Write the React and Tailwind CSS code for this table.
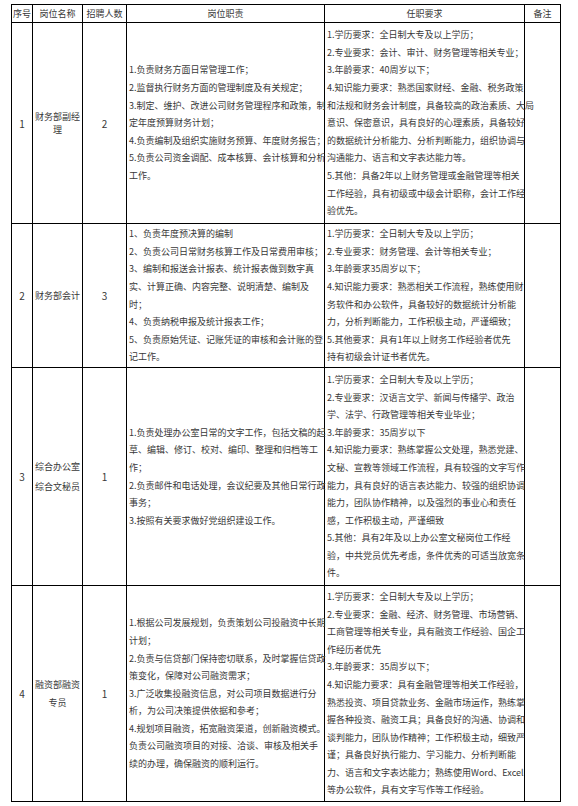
import React from "react";

const rows = [
  {
    no: "1",
    name: "财务部副经理",
    count: "2",
    nameLeading: "leading-[13px]",
    h: "h-[201px]",
    duty: [
      "1.负责财务方面日常管理工作；",
      "2.监督执行财务方面的管理制度及有关规定；",
      "3.制定、维护、改进公司财务管理程序和政策，制",
      "定年度预算财务计划；",
      "4.负责编制及组织实施财务预算、年度财务报告；",
      "5.负责公司资金调配、成本核算、会计核算和分析",
      "工作。",
    ],
    req: [
      "1.学历要求：全日制大专及以上学历；",
      "2.专业要求：会计、审计、财务管理等相关专业；",
      "3.年龄要求：40周岁以下；",
      "4.知识能力要求：熟悉国家财经、金融、税务政策",
      "和法规和财务会计制度，具备较高的政治素质、大局",
      "意识、保密意识，具有良好的心理素质，具备较好",
      "的数据统计分析能力、分析判断能力，组织协调与",
      "沟通能力、语言和文字表达能力等。",
      "5.其他：具备2年以上财务管理或金融管理等相关",
      "工作经验，具有初级或中级会计职称，会计工作经",
      "验优先。",
    ],
  },
  {
    no: "2",
    name: "财务部会计",
    count: "3",
    nameLeading: "leading-[17px]",
    h: "h-[144px]",
    duty: [
      "1、负责年度预决算的编制",
      "2、负责公司日常财务核算工作及日常费用审核；",
      "3、编制和报送会计报表、统计报表做到数字真",
      "实、计算正确、内容完整、说明清楚、编制及",
      "时；",
      "4、负责纳税申报及统计报表工作；",
      "5、负责原始凭证、记账凭证的审核和会计账的登",
      "记工作。",
    ],
    req: [
      "1.学历要求：全日制大专及以上学历；",
      "2.专业要求：财务管理、会计等相关专业；",
      "3.年龄要求35周岁以下；",
      "4.知识能力要求：熟悉相关工作流程，熟练使用财",
      "务软件和办公软件，具备较好的数据统计分析能",
      "力，分析判断能力，工作积极主动，严谨细致；",
      "5.其他要求：具有1年以上财务工作经验者优先",
      "持有初级会计证书者优先。",
    ],
  },
  {
    no: "3",
    name: "综合办公室综合文秘员",
    count: "1",
    nameLeading: "leading-[20px]",
    h: "h-[218px]",
    duty: [
      "1.负责处理办公室日常的文字工作，包括文稿的起",
      "草、编辑、修订、校对、编印、整理和归档等工",
      "作；",
      "2.负责邮件和电话处理，会议纪要及其他日常行政",
      "事务；",
      "3.按照有关要求做好党组织建设工作。",
    ],
    req: [
      "1.学历要求：全日制大专及以上学历；",
      "2.专业要求：汉语言文学、新闻与传播学、政治",
      "学、法学、行政管理等相关专业毕业；",
      "3.年龄要求：35周岁以下",
      "4.知识能力要求：熟练掌握公文处理，熟悉党建、",
      "文秘、宣教等领域工作流程，具有较强的文字写作",
      "能力，具有良好的语言表达能力、较强的组织协调",
      "能力，团队协作精神，以及强烈的事业心和责任",
      "感，工作积极主动，严谨细致",
      "5.其他：具有2年及以上办公室文秘岗位工作经",
      "验，中共党员优先考虑，条件优秀的可适当放宽条",
      "件。",
    ],
  },
  {
    no: "4",
    name: "融资部融资专员",
    count: "1",
    nameLeading: "leading-[18px]",
    h: "h-[216px]",
    duty: [
      "1.根据公司发展规划，负责策划公司投融资中长期",
      "计划；",
      "2.负责与信贷部门保持密切联系，及时掌握信贷政",
      "策变化，保障对公司融资需求；",
      "3.广泛收集投融资信息，对公司项目数据进行分",
      "析，为公司决策提供依据和参考；",
      "4.规划项目融资，拓宽融资渠道，创新融资模式。",
      "负责公司融资项目的对接、洽谈、审核及相关手",
      "续的办理，确保融资的顺利运行。",
    ],
    req: [
      "1.学历要求：全日制大专及以上学历；",
      "2.专业要求：金融、经济、财务管理、市场营销、",
      "工商管理等相关专业，具有融资工作经验、国企工",
      "作经历者优先",
      "3.年龄要求：35周岁以下；",
      "4.知识能力要求：具有金融管理等相关工作经验，",
      "熟悉投资、项目贷款业务、金融市场运作，熟练掌",
      "握各种投资、融资工具；具备良好的沟通、协调和",
      "谈判能力，团队协作精神；工作积极主动，细致严",
      "谨；具备良好执行能力、学习能力、分析判断能",
      "力、语言和文字表达能力；熟练使用Word、Excel",
      "等办公软件，具有文字写作等工作经验。",
    ],
  },
];

const cell = "border border-black align-middle p-0";

const Lines = ({ items }) => (
  <div className="px-[2px]">
    {items.map((t, i) => (
      <div key={i} className="whitespace-nowrap leading-[17.6px]">
        {t}
      </div>
    ))}
  </div>
);

export default function App() {
  return (
    <div className="w-[578px] h-[806px] bg-white overflow-hidden pt-[4px] pl-[11px] text-[9px] text-[#383838] font-['Noto_Sans_CJK_SC','Noto_Sans',sans-serif]">
      <table className="table-fixed border-collapse w-[549px]">
        <colgroup>
          <col className="w-[21px]" />
          <col className="w-[50px]" />
          <col className="w-[44px]" />
          <col className="w-[198px]" />
          <col className="w-[200px]" />
          <col className="w-[36px]" />
        </colgroup>
        <thead>
          <tr className="h-[18px]">
            {["序号", "岗位名称", "招聘人数", "岗位职责", "任职要求", "备注"].map((h) => (
              <th key={h} className={`${cell} font-normal text-center whitespace-nowrap leading-[14px]`}>
                {h}
              </th>
            ))}
          </tr>
        </thead>
        <tbody>
          {rows.map((r) => (
            <tr key={r.no} className={r.h}>
              <td className={`${cell} text-center text-[10px]`}>{r.no}</td>
              <td className={`${cell} text-center px-[2px] ${r.nameLeading}`}>{r.name}</td>
              <td className={`${cell} text-center text-[10px]`}>{r.count}</td>
              <td className={`${cell} overflow-visible`}>
                <Lines items={r.duty} />
              </td>
              <td className={cell}>
                <Lines items={r.req} />
              </td>
              <td className={cell}></td>
            </tr>
          ))}
        </tbody>
      </table>
    </div>
  );
}
